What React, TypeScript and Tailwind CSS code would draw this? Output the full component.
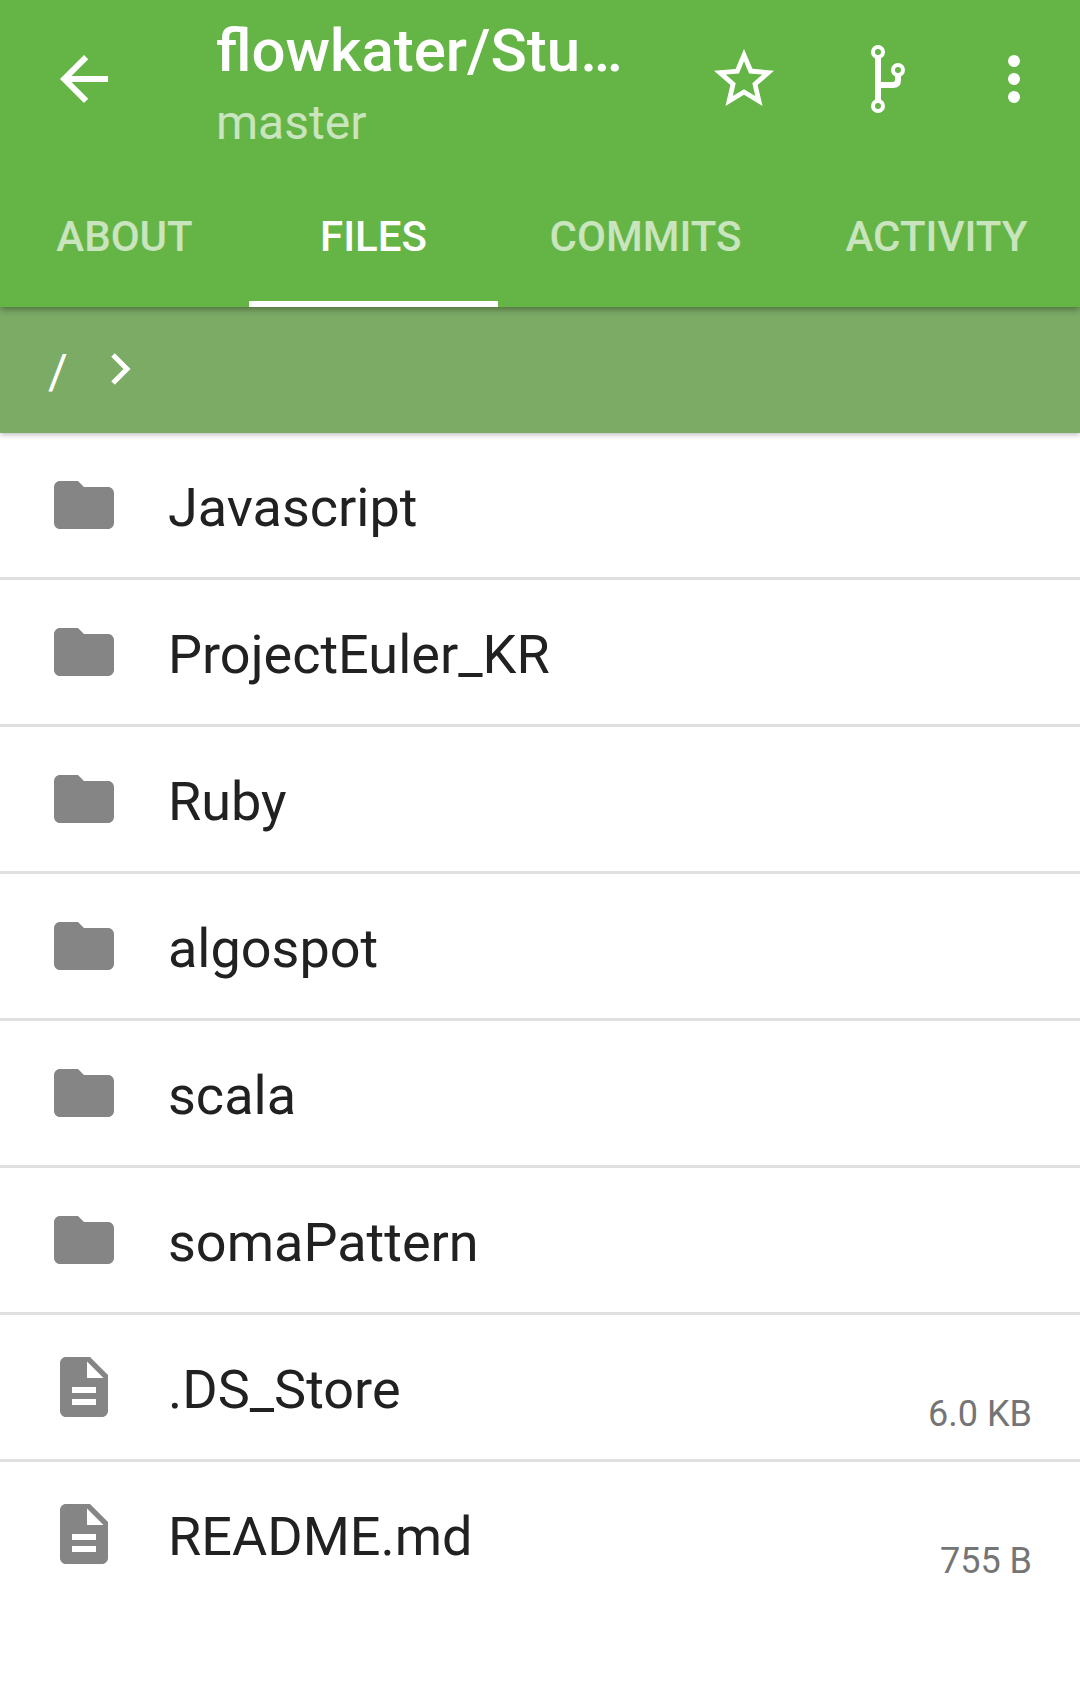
import React from 'react';

const folders = ['Javascript', 'ProjectEuler_KR', 'Ruby', 'algospot', 'scala', 'somaPattern'];
const files = [
  { name: '.DS_Store', size: '6.0 KB' },
  { name: 'README.md', size: '755 B' },
];
const tabs = [
  { label: 'ABOUT', width: 'w-[249px]' },
  { label: 'FILES', width: 'w-[249px]', active: true },
  { label: 'COMMITS', width: 'w-[295px]' },
  { label: 'ACTIVITY', width: 'w-[287px]' },
];

function FolderIcon() {
  return (
    <svg className="h-[72px] w-[72px] shrink-0" viewBox="0 0 24 24" fill="#858585">
      <path d="M10 4H4c-1.1 0-1.99.9-1.99 2L2 18c0 1.1.9 2 2 2h16c1.1 0 2-.9 2-2V8c0-1.1-.9-2-2-2h-8l-2-2z" />
    </svg>
  );
}

function FileIcon() {
  return (
    <svg className="h-[72px] w-[72px] shrink-0" viewBox="0 0 24 24" fill="#858585">
      <path d="M14 2H6c-1.1 0-1.99.9-1.99 2L4 20c0 1.1.89 2 1.99 2H18c1.1 0 2-.9 2-2V8l-6-6zm2 16H8v-2h8v2zm0-4H8v-2h8v2zm-3-5V3.5L18.5 9H13z" />
    </svg>
  );
}

function Row({ name, size, icon }: { name: string; size?: string; icon: React.ReactNode }) {
  return (
    <div className="flex h-[147px] items-center border-b-[3px] border-[#e0e0e0] pl-[48px] pr-[48px] last:border-transparent">
      {icon}
      <span className="ml-[48px] flex-1 pt-[5px] text-[54px] leading-[72px] text-[#212121]">{name}</span>
      {size && <span className="self-end pb-[21px] text-[36px] leading-[48px] text-[#757575]">{size}</span>}
    </div>
  );
}

export default function App() {
  return (
    <div className="min-h-[1699px] w-[1080px] bg-white font-['Roboto',sans-serif]">
      <header className="relative z-20 bg-[#65b446] shadow-[0_2px_7px_rgba(0,0,0,0.4)]">
        <div className="flex h-[163px] items-start">
          <svg className="ml-[48px] mt-[43px] h-[72px] w-[72px] shrink-0" viewBox="0 0 24 24" fill="#fff">
            <path d="M20 11H7.83l5.59-5.59L12 4l-8 8 8 8 1.41-1.41L7.83 13H20v-2z" />
          </svg>
          <div className="ml-[96px] w-[440px] pt-[16px]">
            <div className="text-[60px] font-medium leading-[70px] text-white">flowkater/Stu…</div>
            <div className="text-[48px] leading-[74px] text-white/65">master</div>
          </div>
          <svg className="ml-[52px] mt-[43px] h-[72px] w-[72px] shrink-0" viewBox="0 0 24 24" fill="#fff">
            <path d="M22 9.24l-7.19-.62L12 2 9.19 8.63 2 9.24l5.46 4.73L5.82 21 12 17.27 18.18 21l-1.63-7.03L22 9.24zM12 15.4l-3.76 2.27 1-4.28-3.32-2.88 4.38-.38L12 6.1l1.71 4.04 4.38.38-3.32 2.88 1 4.28L12 15.4z" />
          </svg>
          <svg className="ml-[62px] mt-[43px] h-[72px] w-[72px] shrink-0" viewBox="0 0 72 72" fill="none" stroke="#fff">
            <circle cx="36" cy="9" r="5" strokeWidth="4" />
            <circle cx="56" cy="27" r="5" strokeWidth="4" />
            <circle cx="36" cy="63" r="5" strokeWidth="4" />
            <path d="M36 13v46M36 42h15q5 0 5-5v-6" strokeWidth="6" />
          </svg>
          <div className="ml-[94px] mt-[55px] flex flex-col gap-[6px]">
            <span className="h-[12px] w-[12px] rounded-full bg-white" />
            <span className="h-[12px] w-[12px] rounded-full bg-white" />
            <span className="h-[12px] w-[12px] rounded-full bg-white" />
          </div>
        </div>
        <nav className="flex h-[144px]">
          {tabs.map((tab) => (
            <div
              key={tab.label}
              className={`flex items-center justify-center border-b-[6px] pt-[9px] text-[42px] font-medium ${tab.width} ${
                tab.active ? 'border-white text-white' : 'border-transparent text-white/65'
              }`}
            >
              {tab.label}
            </div>
          ))}
        </nav>
      </header>
      <div className="relative z-10 flex h-[126px] items-center bg-[#7cab66] pl-[48px] shadow-[0_2px_5px_rgba(0,0,0,0.25)]">
        <span className="pt-[4px] text-[48px] leading-none text-white">/</span>
        <svg className="ml-[39px] h-[36px] w-[24px] -translate-y-px" viewBox="0 0 24 36" fill="none" stroke="#fff" strokeWidth="5">
          <path d="M6 4l14 14L6 32" />
        </svg>
      </div>
      <div>
        {folders.map((name) => (
          <Row key={name} name={name} icon={<FolderIcon />} />
        ))}
        {files.map((file) => (
          <Row key={file.name} name={file.name} size={file.size} icon={<FileIcon />} />
        ))}
      </div>
    </div>
  );
}
